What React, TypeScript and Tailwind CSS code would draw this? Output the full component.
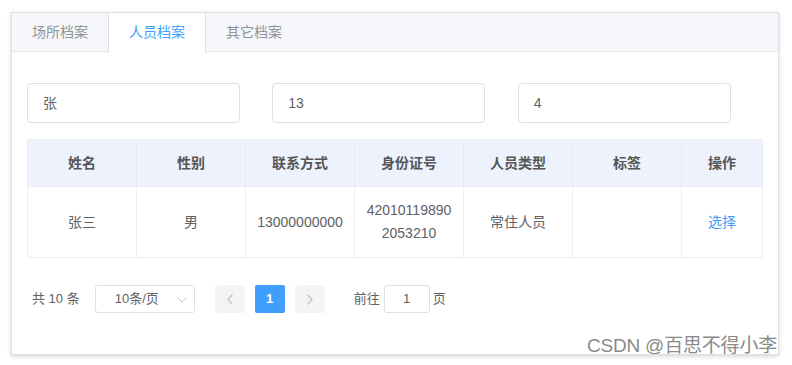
import React from "react";

const font = { fontFamily: '"Liberation Sans", "Noto Sans CJK SC", sans-serif' };

const cols = ["姓名", "性别", "联系方式", "身份证号", "人员类型", "标签", "操作"];

function Chevron({ dir, color }: { dir: "left" | "right" | "down"; color: string }) {
  if (dir === "down") {
    return (
      <svg width="10" height="6" viewBox="0 0 10 6" fill="none">
        <path d="M1 1 L5 5 L9 1" stroke={color} strokeWidth="1" strokeLinecap="round" strokeLinejoin="round" />
      </svg>
    );
  }
  const d = dir === "left" ? "M6 1 L2 5.5 L6 10" : "M2 1 L6 5.5 L2 10";
  return (
    <svg width="8" height="11" viewBox="0 0 8 11" fill="none">
      <path d={d} stroke={color} strokeWidth="1.4" strokeLinecap="round" strokeLinejoin="round" />
    </svg>
  );
}

export default function App() {
  return (
    <div className="relative w-[792px] h-[365px] bg-white" style={font}>
      <div className="ml-[11px] pt-[12px]">
        <div className="w-[768px] h-[343px] border border-[#dcdfe6] bg-white shadow-[0_2px_4px_0_rgba(0,0,0,0.12),0_0_6px_0_rgba(0,0,0,0.04)]">
          {/* tabs header */}
          <div className="flex h-[39px] bg-[#f5f7fa] border-b border-[#e4e7ed]">
            <div className="w-[96px] h-[39px] flex items-center justify-center text-[14px] text-[#909399]">场所档案</div>
            <div className="w-[98px] h-[40px] flex items-center justify-center text-[14px] text-[#409eff] bg-white border-l border-r border-[#dcdfe6] -mb-px pb-px">
              人员档案
            </div>
            <div className="w-[96px] h-[39px] flex items-center justify-center text-[14px] text-[#909399]">其它档案</div>
          </div>

          <div className="px-[15px] pt-[31px]">
            {/* inputs */}
            <div className="grid grid-cols-3">
              {["张", "13", "4"].map((v) => (
                <div
                  key={v}
                  className="w-[213px] h-10 border border-[#dcdfe6] rounded-[4px] flex items-center px-[15px] text-[14px] text-[#606266]"
                >
                  {v}
                </div>
              ))}
            </div>

            {/* table */}
            <div className="mt-4 border border-[#ebeef5]">
              <div className="grid grid-cols-[1fr_1fr_1fr_1fr_1fr_1fr_80px] h-[47px] bg-[#edf2fc] border-b border-[#ebeef5]">
                {cols.map((c, i) => (
                  <div
                    key={c}
                    className={`flex items-center justify-center text-[14px] font-bold text-[#555555] ${
                      i < 6 ? "border-r border-[#e6eaf2]" : ""
                    }`}
                  >
                    {c}
                  </div>
                ))}
              </div>
              <div className="grid grid-cols-[1fr_1fr_1fr_1fr_1fr_1fr_80px] h-[70px]">
                {["张三", "男", "13000000000", "ID", "常住人员", "", "选择"].map((c, i) => (
                  <div
                    key={i}
                    className={`flex items-center justify-center text-center text-[14px] ${
                      i === 6 ? "text-[#409eff]" : "text-[#606266]"
                    } ${i < 6 ? "border-r border-[#ebeef5]" : ""}`}
                  >
                    {c === "ID" ? (
                      <div className="leading-[23px]">
                        <div>42010119890</div>
                        <div>2053210</div>
                      </div>
                    ) : (
                      c
                    )}
                  </div>
                ))}
              </div>
            </div>

            {/* pagination */}
            <div className="mt-[27px] flex items-center h-[28px] pl-[5px] text-[13px] text-[#606266]">
              <span>共 10 条</span>
              <div className="ml-[15px] w-[100px] h-[28px] border border-[#dcdfe6] rounded-[3px] flex items-center relative">
                <span className="absolute left-[19px] text-[13px] text-[#606266]">10条/页</span>
                <span className="absolute left-[81px] top-[11px] flex">
                  <Chevron dir="down" color="#c0c4cc" />
                </span>
              </div>
              <div className="ml-[20px] w-[30px] h-[28px] bg-[#f4f4f5] rounded-[2px] flex items-center justify-center">
                <Chevron dir="left" color="#c0c4cc" />
              </div>
              <div className="ml-[10px] w-[30px] h-[28px] bg-[#409eff] rounded-[2px] flex items-center justify-center text-white font-bold text-[13px]">
                1
              </div>
              <div className="ml-[10px] w-[30px] h-[28px] bg-[#f4f4f5] rounded-[2px] flex items-center justify-center">
                <Chevron dir="right" color="#c0c4cc" />
              </div>
              <span className="ml-[29px]">前往</span>
              <div className="ml-[4px] w-[46px] h-[28px] border border-[#dcdfe6] rounded-[3px] flex items-center justify-center text-[#606266]">
                1
              </div>
              <span className="ml-[3px]">页</span>
            </div>
          </div>
        </div>
      </div>
      <div className="absolute left-[587px] top-[334px] text-[19px] leading-[24px] tracking-[-0.2px] text-[#8a8a8a] whitespace-nowrap">
        CSDN @百思不得小李
      </div>
    </div>
  );
}
